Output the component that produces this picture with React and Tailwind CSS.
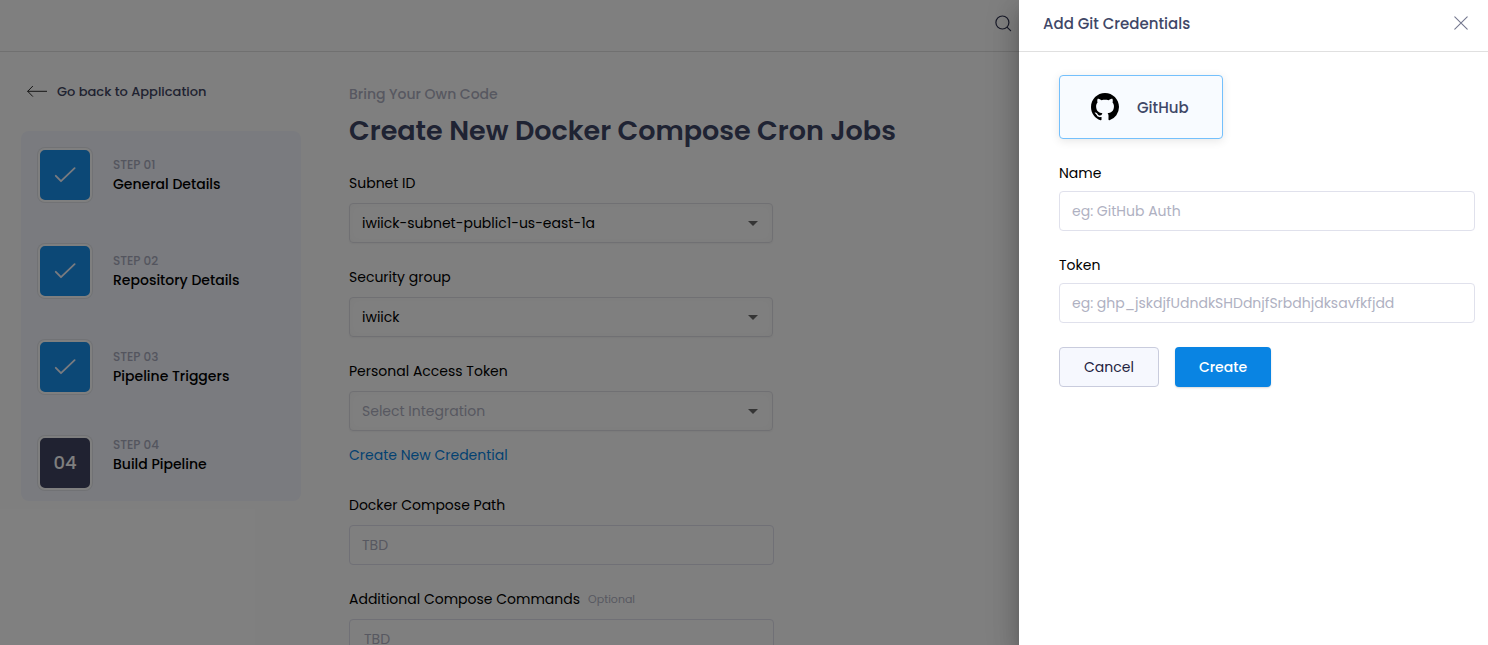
const STEPS = [
  { number: "01", title: "General Details", done: true },
  { number: "02", title: "Repository Details", done: true },
  { number: "03", title: "Pipeline Triggers", done: true },
  { number: "04", title: "Build Pipeline", done: false },
];

function BackArrow() {
  return (
    <svg className="h-3 w-5 shrink-0" viewBox="0 0 20 12" fill="none" stroke="#2a2a2a" strokeWidth="1" strokeLinecap="round" strokeLinejoin="round">
      <path d="M19.6 6.3H0.8M5.6 1.3L0.7 6.3l4.9 5" />
    </svg>
  );
}

function Check() {
  return (
    <svg className="h-4 w-[22px]" viewBox="0 0 22 16" fill="none" stroke="#f4f6ff" strokeWidth="1.8" strokeLinecap="round" strokeLinejoin="round">
      <path d="M1.8 8.8L7 14.2L20.6 1.2" />
    </svg>
  );
}

function SearchIcon() {
  return (
    <svg className="h-[17px] w-[17px]" viewBox="0 0 17 17" fill="none" stroke="#2f3350" strokeWidth="1.2" strokeLinecap="round">
      <circle cx="7.4" cy="7.5" r="6.5" />
      <path d="M12.2 12.3l3.4 3.4" />
    </svg>
  );
}

function CloseIcon() {
  return (
    <svg className="h-[14px] w-[14px]" viewBox="0 0 14 14" fill="none" stroke="#74788f" strokeWidth="1.1" strokeLinecap="round">
      <path d="M0.8 0.8l12.4 12.4M13.2 0.8L0.8 13.2" />
    </svg>
  );
}

function GitHubIcon() {
  return (
    <svg className="h-7 w-7" viewBox="0 0 16 16" fill="#000000">
      <path d="M8 0C3.58 0 0 3.58 0 8c0 3.54 2.29 6.53 5.47 7.59.4.07.55-.17.55-.38 0-.19-.01-.82-.01-1.49-2.01.37-2.53-.49-2.69-.94-.09-.23-.48-.94-.82-1.13-.28-.15-.68-.52-.01-.53.63-.01 1.08.58 1.23.82.72 1.21 1.87.87 2.33.66.07-.52.28-.87.51-1.07-1.78-.2-3.64-.89-3.64-3.95 0-.87.31-1.59.82-2.15-.08-.2-.36-1.02.08-2.12 0 0 .67-.21 2.2.82.64-.18 1.32-.27 2-.27s1.36.09 2 .27c1.53-1.04 2.2-.82 2.2-.82.44 1.1.16 1.92.08 2.12.51.56.82 1.27.82 2.15 0 3.07-1.87 3.75-3.65 3.95.29.25.54.73.54 1.48 0 1.07-.01 1.93-.01 2.2 0 .21.15.46.55.38A8.01 8.01 0 0 0 16 8c0-4.42-3.58-8-8-8z" />
    </svg>
  );
}

function Step({ number, title, done }) {
  return (
    <li className="flex h-[54px] items-center">
      <div
        className={`flex h-[54px] w-[54px] shrink-0 items-center justify-center rounded-[7px] border-2 border-white text-[18px] font-medium text-white shadow-[0_0_0_1px_#e3e5ea] ${
          done ? "bg-[#1890ec]" : "bg-[#414562]"
        }`}
      >
        {done ? <Check /> : <span className="pb-0.5">{number}</span>}
      </div>
      <div className={`ml-[21px] ${done ? "" : "pb-4"}`}>
        <p className="text-[12px] leading-[18px] font-medium text-[#a8abbd]">STEP {number}</p>
        <p className="text-[14px] leading-[21px] font-medium text-black">{title}</p>
      </div>
    </li>
  );
}

function Select({ label, value, placeholder }) {
  return (
    <div>
      <p className="text-[14px] leading-5 text-black">{label}</p>
      <div className="mt-[10px] flex h-10 w-[424px] items-center justify-between rounded-[4px] border border-[#e0e0e6] pr-[14px] pl-3 shadow-[0_1px_2px_rgba(0,0,0,0.05),inset_0_0_10px_rgba(0,0,0,0.03)]">
        <span className={`text-[14px] leading-5 ${value ? "text-black" : "text-[#afb1c2]"}`}>{value || placeholder}</span>
        <svg className="h-[5px] w-[10px]" viewBox="0 0 10 5" fill="#6b6b6b">
          <path d="M0 0h10L5 5z" />
        </svg>
      </div>
    </div>
  );
}

function Field({ label, placeholder, optional, inset }) {
  return (
    <div>
      <div className="flex items-center gap-2">
        <p className="text-[14px] leading-5 text-black">{label}</p>
        {optional && <span className="text-[11px] leading-4 text-[#afb1c2]">Optional</span>}
      </div>
      <div className={`mt-[10px] flex h-10 w-[425px] items-center rounded-[4px] border border-[#e0e0ec] text-[14px] leading-5 text-[#afb1c2] ${inset ? "pl-[14px]" : "pl-3"}`}>
        {placeholder}
      </div>
    </div>
  );
}

function DrawerField({ label, placeholder }) {
  return (
    <label className="block">
      <span className="block text-[14px] leading-5 text-black">{label}</span>
      <input
        type="text"
        placeholder={placeholder}
        className="mt-2 block h-10 w-full rounded-[4px] border border-[#e0e1ec] bg-white px-3 text-[14px] text-black placeholder:text-[#afb1c2] focus:outline-none"
      />
    </label>
  );
}

function Page() {
  return (
    <div className="flex h-full flex-col bg-white">
      <header className="flex h-[52px] shrink-0 items-center border-b border-[#e0e0e0] pb-[5px] pl-[995px]">
        <SearchIcon />
      </header>
      <div className="flex min-h-0 flex-1">
        <aside className="ml-[21px] w-[280px] shrink-0 pt-[29px]">
          <a className="flex items-center gap-[10px] pl-[6px]">
            <BackArrow />
            <span className="pt-0.5 text-[13px] leading-[18px] font-medium text-[#414562]">Go back to Application</span>
          </a>
          <ul className="mt-[30px] flex h-[370px] flex-col gap-[42px] rounded-lg bg-[#f4f6ff] pt-[17px] pl-[17px]">
            {STEPS.map((step) => (
              <Step key={step.number} {...step} />
            ))}
          </ul>
        </aside>
        <main className="ml-12 flex-1 pt-8">
          <p className="text-[14px] leading-5 font-medium text-[#afb1c2]">Bring Your Own Code</p>
          <h1 className="mt-[7px] text-[27px] leading-10 font-semibold whitespace-nowrap text-[#3f4767]">
            Create New Docker Compose Cron Jobs
          </h1>
          <div className="mt-[22px] flex flex-col gap-6">
            <Select label="Subnet ID" value="iwiick-subnet-public1-us-east-1a" />
            <Select label="Security group" value="iwiick" />
            <Select label="Personal Access Token" placeholder="Select Integration" />
          </div>
          <a className="mt-[14px] block text-[14px] leading-5 text-[#0984e3]">Create New Credential</a>
          <div className="mt-[30px] flex flex-col gap-6">
            <Field label="Docker Compose Path" placeholder="TBD" />
            <Field label="Additional Compose Commands" placeholder="TBD" optional inset />
          </div>
        </main>
      </div>
    </div>
  );
}

function Drawer() {
  return (
    <div className="flex h-full w-[469px] flex-col bg-white shadow-[0_8px_10px_-5px_rgba(0,0,0,0.2),0_16px_24px_2px_rgba(0,0,0,0.14),0_6px_30px_5px_rgba(0,0,0,0.12)]">
      <div className="flex h-[52px] shrink-0 items-center justify-between border-b border-[#e0e0e0] pr-5 pb-1 pl-6">
        <h2 className="text-[15px] leading-6 font-medium text-[#3f4767]">Add Git Credentials</h2>
        <button aria-label="Close" className="pb-px">
          <CloseIcon />
        </button>
      </div>
      <div className="flex flex-col pt-[23px] pr-[13px] pl-10">
        <button className="flex h-16 w-[164px] items-center gap-[18px] rounded-[4px] border border-[#74c0fc] bg-[#f8fbff] pl-[31px] shadow-[0_2px_10px_rgba(0,0,0,0.1)]">
          <GitHubIcon />
          <span className="pt-0.5 text-[15px] leading-6 font-medium text-[#3f4767]">GitHub</span>
        </button>
        <div className="mt-6 flex flex-col gap-6">
          <DrawerField label="Name" placeholder="eg: GitHub Auth" />
          <DrawerField label="Token" placeholder="eg: ghp_jskdjfUdndkSHDdnjfSrbdhjdksavfkfjdd" />
        </div>
        <div className="mt-6 flex gap-4">
          <button className="h-10 w-[100px] rounded-[4px] border border-[#c9ccdd] bg-[#f6f8fe] text-[14px] text-[#1f2340]">Cancel</button>
          <button className="h-10 w-24 rounded-[4px] bg-[#0984e3] text-[14px] font-medium text-white shadow-[0_1px_2px_rgba(0,0,0,0.15)]">Create</button>
        </div>
      </div>
    </div>
  );
}

export default function App() {
  return (
    <div className="relative h-screen w-screen overflow-hidden font-['Poppins','Inter',sans-serif]">
      <Page />
      <div className="absolute inset-0 flex justify-end bg-black/50">
        <Drawer />
      </div>
    </div>
  );
}
